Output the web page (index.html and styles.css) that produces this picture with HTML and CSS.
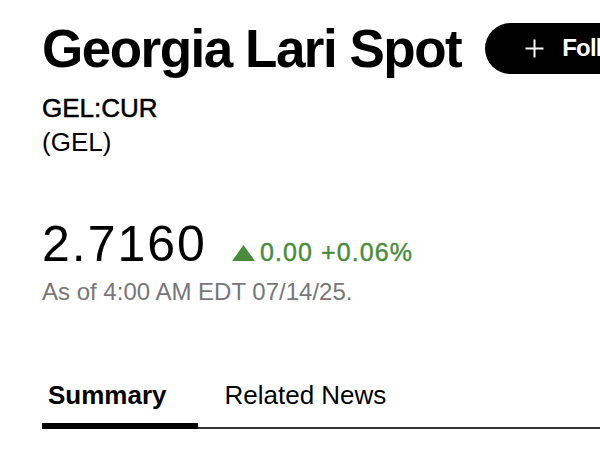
FILE: index.html
```html
<!DOCTYPE html>
<html lang="en">
<head>
<meta charset="utf-8">
<title>Georgia Lari Spot</title>
<link rel="stylesheet" href="styles.css">
</head>
<body>
<main class="page">
  <header class="header">
    <h1 class="title">Georgia Lari Spot</h1>
    <button class="follow" type="button">
      <svg class="plus" width="19" height="19" viewBox="0 0 19 19" aria-hidden="true">
        <path d="M9.5 0.5V18.5M0.5 9.5H18.5" stroke="#fff" stroke-width="2" fill="none"/>
      </svg>
      <span>Follow</span>
    </button>
  </header>
  <div class="ticker">GEL:CUR</div>
  <div class="currency">(GEL)</div>
  <div class="quote">
    <span class="price">2.7160</span>
    <span class="change">
      <svg class="arrow" width="23" height="16" viewBox="0 0 23 16" aria-hidden="true">
        <path d="M11.5 0L23 16H0Z" fill="#4a8b3d"/>
      </svg>
      <span class="change-text">0.00 +0.06%</span>
    </span>
  </div>
  <div class="asof">As of 4:00 AM EDT 07/14/25.</div>
  <nav class="tabs">
    <span class="tab tab-active">Summary</span>
    <span class="tab">Related News</span>
  </nav>
</main>
</body>
</html>
```

FILE: styles.css
```css
html, body {
  margin: 0;
  padding: 0;
  background: #fff;
  overflow: hidden;
}

body {
  width: 600px;
  height: 450px;
  font-family: "Liberation Sans", Arial, sans-serif;
  color: #000;
}

.page {
  padding: 19px 0 0 42px;
}

.header {
  display: flex;
  align-items: center;
  gap: 24px;
  height: 60px;
  white-space: nowrap;
}

.title {
  margin: 0;
  font-size: 53px;
  line-height: 60px;
  font-weight: 700;
  letter-spacing: -1.5px;
}

.follow {
  flex: none;
  display: flex;
  align-items: center;
  gap: 18px;
  height: 51px;
  margin-top: -2px;
  padding: 0 40px;
  border: 0;
  border-radius: 26px;
  background: #000;
  color: #fff;
  font-family: "Liberation Sans", Arial, sans-serif;
  font-size: 24px;
  font-weight: 700;
  letter-spacing: -0.8px;
}

.plus {
  display: block;
}

.ticker,
.currency {
  font-size: 26px;
  line-height: 35px;
}

.ticker {
  margin-top: 11.5px;
  -webkit-text-stroke: 0.5px #000;
}

.currency {
  margin-top: -1px;
}

.quote {
  display: flex;
  align-items: baseline;
  margin-top: 58px;
  height: 52px;
}

.price {
  font-size: 50px;
  line-height: 52px;
  letter-spacing: 2px;
}

.change {
  display: flex;
  align-items: baseline;
  gap: 5px;
  margin-left: 25px;
  color: #4a8b3d;
}

.arrow {
  display: block;
  align-self: flex-end;
  margin-bottom: 5px;
}

.change-text {
  font-size: 25px;
  line-height: 28px;
  letter-spacing: 1.1px;
  -webkit-text-stroke: 0.4px #4a8b3d;
}

.asof {
  margin-top: 8px;
  font-size: 24px;
  line-height: 28px;
  color: #777;
}

.tabs {
  display: flex;
  margin-top: 74px;
  border-bottom: 2px solid #333;
}

.tab {
  font-size: 26px;
  line-height: 30px;
  padding: 0 0 17px 27px;
}

.tab-active {
  font-weight: 700;
  padding: 0 31px 11px 6px;
  border-bottom: 6px solid #000;
  margin-bottom: -2px;
}
```
